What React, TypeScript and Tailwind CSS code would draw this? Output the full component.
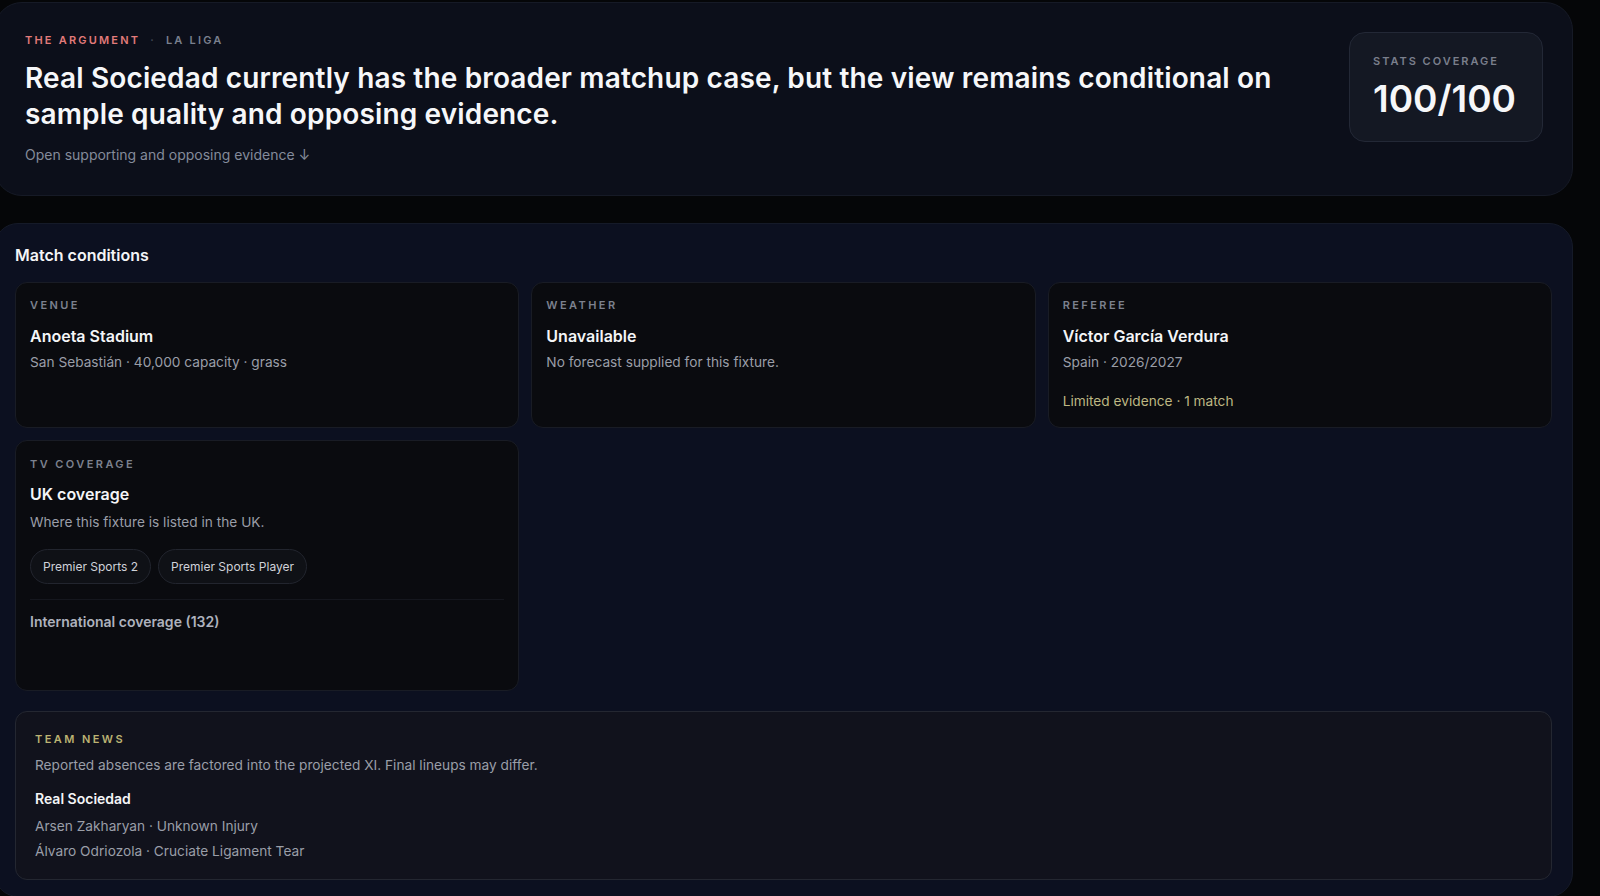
import React from "react";

type Condition = {
  label: string;
  title: string;
  detail: string;
  note?: string;
};

const conditions: Condition[] = [
  {
    label: "Venue",
    title: "Anoeta Stadium",
    detail: "San Sebastián · 40,000 capacity · grass",
  },
  {
    label: "Weather",
    title: "Unavailable",
    detail: "No forecast supplied for this fixture.",
  },
  {
    label: "Referee",
    title: "Víctor García Verdura",
    detail: "Spain · 2026/2027",
    note: "Limited evidence · 1 match",
  },
];

const ukChannels = ["Premier Sports 2", "Premier Sports Player"];

const absences = [
  "Arsen Zakharyan · Unknown Injury",
  "Álvaro Odriozola · Cruciate Ligament Tear",
];

function CardLabel({ children }: { children: React.ReactNode }) {
  return (
    <p className="text-[11px] leading-4 font-semibold uppercase tracking-[0.22em] text-[#7c818e]">
      {children}
    </p>
  );
}

function ConditionCard({ item }: { item: Condition }) {
  return (
    <div className="rounded-xl border border-[#191c25] bg-[#0a0b0f] px-[14px] pt-[14px] pb-4">
      <CardLabel>{item.label}</CardLabel>
      <p className="mt-[11px] text-[16px] leading-6 font-semibold text-[#f4f5f7]">{item.title}</p>
      <p className="mt-[4px] text-[13.7px] leading-5 text-[#9a9ea8]">{item.detail}</p>
      {item.note && (
        <p className="mt-[19px] text-[13.7px] leading-5 text-[#bdb783]">{item.note}</p>
      )}
    </div>
  );
}

export default function App() {
  return (
    <div className="min-h-screen overflow-hidden bg-[#050608] font-['Inter',sans-serif] antialiased">
      <div className="-ml-[6px] w-[1579px] pt-[2px]">
        {/* argument header */}
        <section className="flex items-start justify-between rounded-[28px] border border-[#161a26] bg-[#0c0f1a] pt-[29px] pr-[29px] pb-[29px] pl-[30px]">
          <div>
            <p className="flex items-center gap-[10px] text-[11px] leading-4 font-semibold uppercase tracking-[0.2em]">
              <span className="text-[#e27b7b]">The Argument</span>
              <span className="text-[#3f4452]">·</span>
              <span className="text-[#7a808e]">La Liga</span>
            </p>
            <h1 className="mt-[12px] max-w-[1280px] text-[28px] leading-9 font-semibold tracking-[0.005em] text-[#f6f7f9]">
              Real Sociedad currently has the broader matchup case, but the view remains conditional on
              sample quality and opposing evidence.
            </h1>
            <button className="mt-[13px] text-[14px] leading-5 text-[#848b9b]">
              Open supporting and opposing evidence ↓
            </button>
          </div>
          <div className="w-[194px] rounded-2xl border border-[#232836] bg-[#141823] px-[23px] pt-[20px] pb-[22px]">
            <p className="text-[11px] leading-4 font-semibold uppercase tracking-[0.18em] text-[#7a7f8c]">
              Stats coverage
            </p>
            <p className="mt-[10px] text-[37px] leading-10 font-semibold text-[#f6f7f9]">100/100</p>
          </div>
        </section>

        {/* match conditions */}
        <section className="mt-[27px] rounded-[24px] border border-[#151a28] bg-[#0c1020] px-[20px] pt-[19px] pb-[16px]">
          <h2 className="text-[16px] leading-6 font-semibold text-[#f4f5f7]">Match conditions</h2>

          <div className="mt-[15px] grid grid-cols-3 gap-x-[12px] gap-y-[12px]">
            {conditions.map((item) => (
              <ConditionCard key={item.label} item={item} />
            ))}

            <div className="rounded-xl border border-[#191c25] bg-[#0a0b0f] px-[14px] pt-[15px] pb-[58px]">
              <CardLabel>TV coverage</CardLabel>
              <p className="mt-[10px] text-[16px] leading-6 font-semibold text-[#f4f5f7]">UK coverage</p>
              <p className="mt-[6px] text-[13.7px] leading-5 text-[#9a9ea8]">Where this fixture is listed in the UK.</p>
              <div className="mt-[17px] flex gap-[7px]">
                {ukChannels.map((ch) => (
                  <span
                    key={ch}
                    className="rounded-full border border-[#22252e] bg-[#0f1116] px-[12px] py-[8.5px] text-[12px] leading-4 text-[#cfd2d9]"
                  >
                    {ch}
                  </span>
                ))}
              </div>
              <div className="mt-[15px] border-t border-[#15171e] pt-[12px]">
                <p className="text-[14px] leading-5 font-semibold text-[#aeb2bd]">International coverage (132)</p>
              </div>
            </div>
          </div>

          {/* team news */}
          <div className="mt-[20px] rounded-xl border border-[#242731] bg-[#11121c] px-[19px] pt-[19px] pb-[18px]">
            <p className="text-[11px] leading-4 font-semibold uppercase tracking-[0.22em] text-[#bcb373]">Team news</p>
            <p className="mt-[8px] text-[13.7px] leading-5 text-[#9a9ea8]">
              Reported absences are factored into the projected XI. Final lineups may differ.
            </p>
            <p className="mt-[14px] text-[14px] leading-5 font-semibold text-[#f4f5f7]">Real Sociedad</p>
            <ul className="mt-[7px] space-y-[5px]">
              {absences.map((a) => (
                <li key={a} className="text-[13.7px] leading-5 text-[#9a9ea8]">
                  {a}
                </li>
              ))}
            </ul>
          </div>
        </section>
      </div>
    </div>
  );
}
